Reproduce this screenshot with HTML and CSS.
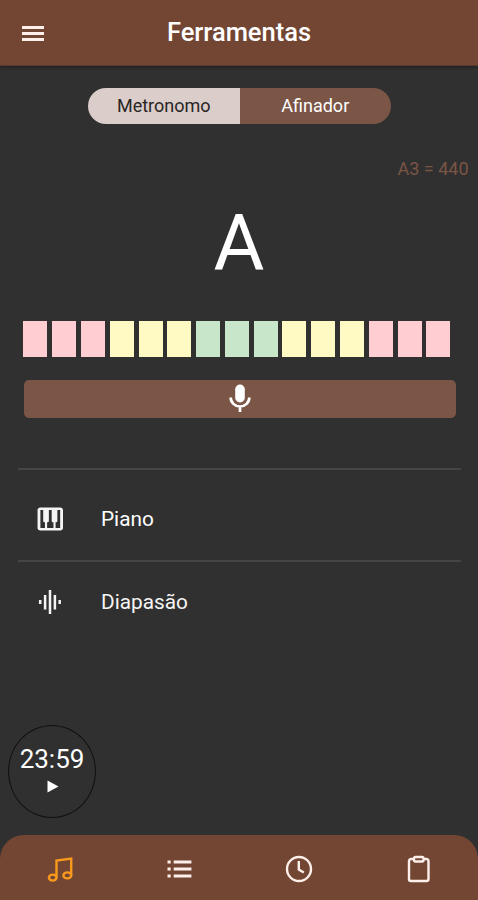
FILE: index.html
```html
<!DOCTYPE html>
<html lang="pt">
<head>
  <meta charset="UTF-8">
  <title>Ferramentas</title>
  <meta name="viewport" content="width=device-width, initial-scale=1.0">
  <link rel="stylesheet" href="styles.css">
</head>
<body>
  <header>
    <button class="menu" aria-label="Menu"><span></span><span></span><span></span></button>
    <h1>Ferramentas</h1>
  </header>

  <main>
    <div class="tabs">
      <button class="tab selected">Metronomo</button>
      <button class="tab">Afinador</button>
    </div>
    <p class="pitch">A3 = 440</p>
    <div class="note">A</div>

    <div class="meter">
      <i class="red"></i><i class="red"></i><i class="red"></i>
      <i class="yellow"></i><i class="yellow"></i><i class="yellow"></i>
      <i class="green"></i><i class="green"></i><i class="green"></i>
      <i class="yellow"></i><i class="yellow"></i><i class="yellow"></i>
      <i class="red"></i><i class="red"></i><i class="red"></i>
    </div>

    <button class="mic" aria-label="Microfone">
      <svg width="22" height="29" viewBox="0 0 22 29">
        <rect x="6.2" y="0.5" width="9.6" height="18" rx="4.8" fill="#fff"/>
        <path d="M1.7 13.5a9.3 9 0 0 0 18.6 0M11 22.5V28" fill="none" stroke="#fff" stroke-width="2.7"/>
      </svg>
    </button>

    <ul class="tools">
      <li>
        <svg width="26" height="24" viewBox="2.6 2.6 18.4 18.8" preserveAspectRatio="none">
          <path fill="#f5f5f5" d="M19 3H5c-1.100 0-2 .9-2 2v14c0 1.100.9 2 2 2h14c1.100 0 2-.9 2-2V5c0-1.100-.9-2-2-2zm-5 11.500h.25V19h-4.500v-4.500H10c.55 0 1-.45 1-1V5h2v8.500c0 .55.45 1 1 1zM5 5h2v8.500c0 .55.45 1 1 1h.25V19H5V5zm14 14h-3.250v-4.500H16c.55 0 1-.45 1-1V5h2v14z"/>
        </svg>
        <span>Piano</span>
      </li>
      <li>
        <svg width="26" height="26" viewBox="0 0 26 26">
          <path d="M3.200 11v4M8.100 6v14.500M13 1v24M17.900 6v14.500M22.700 11v4" stroke="#f5f5f5" stroke-width="2.500"/>
        </svg>
        <span>Diapasão</span>
      </li>
    </ul>
  </main>

  <div class="timer">
    <span>23:59</span>
    <svg width="12" height="13" viewBox="0 0 12 13"><path d="M0.500 0.500v12l11-6z" fill="#fff"/></svg>
  </div>

  <nav>
    <a class="active">
      <svg width="28" height="28" viewBox="0 0 28 28">
        <path d="M10.500 22.500V5.500L25.200 3.500v17"/>
        <ellipse cx="6.700" cy="22.600" rx="3.800" ry="3"/>
        <ellipse cx="21.300" cy="20.400" rx="3.900" ry="3"/>
      </svg>
    </a>
    <a>
      <svg width="28" height="28" viewBox="0 0 28 28">
        <path d="M2.500 7h3.200M2.500 14h3.200M2.500 21h3.200M8.700 7h17.700M8.700 14h17.700M8.700 21h17.700" stroke-width="2.900"/>
      </svg>
    </a>
    <a>
      <svg width="28" height="28" viewBox="0 0 28 28">
        <circle cx="14" cy="14" r="12"/>
        <path d="M13.800 6v8.500l5 3"/>
      </svg>
    </a>
    <a>
      <svg width="28" height="28" viewBox="0 0 28 28">
        <path d="M9.500 4H7a2 2 0 0 0-2 2v18a2 2 0 0 0 2 2h15.500a2 2 0 0 0 2-2V6a2 2 0 0 0-2-2h-2.500"/>
        <rect x="10" y="2" width="9.500" height="4.500" rx="1.500"/>
      </svg>
    </a>
  </nav>
</body>
</html>
```

FILE: styles.css
```css
* {
  box-sizing: border-box;
}
body {
  margin: 0;
  height: 900px;
  display: flex;
  flex-direction: column;
  overflow: hidden;
  background: #303030;
  color: #fff;
  font-family: Roboto, sans-serif;
}
button {
  border: 0;
  padding: 0;
  font: inherit;
  color: inherit;
}
header {
  display: grid;
  grid-template-columns: 66px 1fr 66px;
  align-items: center;
  height: 66px;
  flex: none;
  background: #734633;
  border-bottom: 1px solid #593a2d;
  box-shadow: 0 1px 3px rgba(0,0,0,0.4);
}
.menu {
  display: flex;
  flex-direction: column;
  gap: 3px;
  width: 22px;
  margin: 1px 0 0 22px;
  background: none;
}
.menu span {
  height: 3px;
  background: #fdf0ea;
}
h1 {
  margin: 0;
  padding-bottom: 2px;
  font-size: 25.5px;
  font-weight: 500;
  line-height: 62px;
  text-align: center;
}
main {
  flex: 1;
}
.tabs {
  display: flex;
  width: 303px;
  height: 36px;
  margin: 22px 0 0 88px;
  border-radius: 18px;
  overflow: hidden;
}
.tab {
  flex: 1;
  background: #7b5546;
  font-size: 18px;
  line-height: 36px;
}
.tab.selected {
  background: #dacdca;
  color: #292525;
}
.pitch {
  margin: 34px 9.5px 0 0;
  font-size: 18px;
  line-height: 22px;
  text-align: right;
  color: #7b5546;
}
.note {
  margin-top: 18px;
  font-size: 78px;
  line-height: 92px;
  text-align: center;
}
.meter {
  display: grid;
  grid-template-columns: repeat(15, 1fr);
  column-gap: 4.7px;
  width: 427px;
  height: 36px;
  margin: 31px 0 0 23.4px;
}
.red {
  background: #ffcdd2;
}
.yellow {
  background: #fff9c4;
}
.green {
  background: #c8e6c9;
}
.mic {
  display: flex;
  align-items: center;
  justify-content: center;
  width: 432px;
  height: 38px;
  margin: 23px 0 0 23.5px;
  padding-bottom: 1px;
  border-radius: 5px;
  background: #7b5546;
}
.tools {
  margin: 50px 17px 0 18px;
  padding: 0;
  list-style: none;
}
.tools li {
  display: flex;
  align-items: center;
  gap: 38px;
  height: 92px;
  padding: 8px 0 0 19px;
  border-top: 2px solid #454545;
  font-size: 20.8px;
}
.tools li + li {
  height: 82px;
  padding-top: 0;
  color: #f5f5f5;
}
.timer {
  display: flex;
  flex-direction: column;
  align-items: center;
  gap: 6px;
  width: 88px;
  height: 93px;
  margin: 0 0 17px 8px;
  padding-top: 19px;
  border: 1.5px solid #101010;
  border-radius: 50%;
  font-size: 26px;
  line-height: 29px;
}
.timer svg {
  margin-left: 2px;
}
nav {
  display: grid;
  grid-template-columns: repeat(4, 1fr);
  align-items: center;
  justify-items: center;
  height: 65px;
  flex: none;
  padding-top: 3px;
  border-radius: 24px 24px 0 0;
  background: #734633;
}
nav a {
  height: 28px;
}
nav svg {
  fill: none;
  stroke: #fdf0ea;
  stroke-width: 2.4;
}
nav .active svg {
  stroke: #f99a1c;
}
```
